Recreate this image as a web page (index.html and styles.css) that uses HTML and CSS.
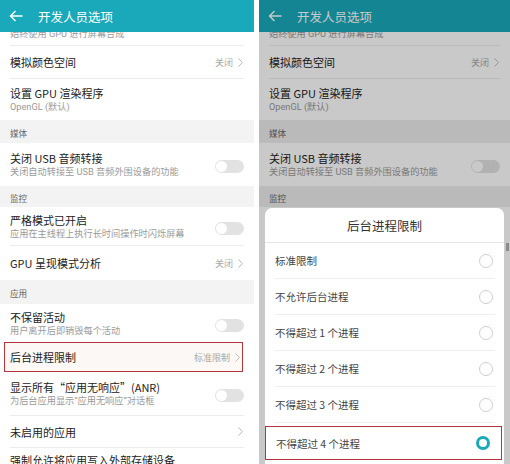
FILE: index.html
```html
<!DOCTYPE html>
<html lang="zh-CN">
<head>
<meta charset="utf-8">
<title>开发人员选项</title>
<link rel="stylesheet" href="styles.css">
</head>
<body>
<div class="panel">
  <div class="header">
    <svg class="back" width="14" height="12" viewBox="0 0 14 12"><path d="M13.5 6H1.5M6.5 1L1.5 6L6.5 11" fill="none" stroke="#fff" stroke-width="1.4"/></svg>
    <span>开发人员选项</span>
  </div>
  <div class="list">
    <div class="row partial"><div class="sub cut">始终使用 GPU 进行屏幕合成</div></div>
    <div class="row h33"><div class="title">模拟颜色空间</div><div class="val">关闭<svg class="chev" width="5" height="9" viewBox="0 0 5 9"><path d="M0.5 0.5L4.5 4.5L0.5 8.5" fill="none" stroke="#bbb" stroke-width="1"/></svg></div></div>
    <div class="row h41 nb"><div class="txt"><div class="title">设置 GPU 渲染程序</div><div class="sub">OpenGL (默认)</div></div></div>
    <div class="band h23">媒体</div>
    <div class="row h43 nb"><div class="txt"><div class="title">关闭 USB 音频转接</div><div class="sub">关闭自动转接至 USB 音频外围设备的功能</div></div><div class="toggle"></div></div>
    <div class="band h21">监控</div>
    <div class="row h39"><div class="txt"><div class="title">严格模式已开启</div><div class="sub">应用在主线程上执行长时间操作时闪烁屏幕</div></div><div class="toggle"></div></div>
    <div class="row h34 nb"><div class="title">GPU 呈现模式分析</div><div class="val">关闭<svg class="chev" width="5" height="9" viewBox="0 0 5 9"><path d="M0.5 0.5L4.5 4.5L0.5 8.5" fill="none" stroke="#bbb" stroke-width="1"/></svg></div></div>
    <div class="band h24">应用</div>
    <div class="row h38 nb"><div class="txt"><div class="title">不保留活动</div><div class="sub">用户离开后即销毁每个活动</div></div><div class="toggle"></div></div>
    <div class="row hl"><div class="title">后台进程限制</div><div class="val">标准限制<svg class="chev" width="5" height="9" viewBox="0 0 5 9"><path d="M0.5 0.5L4.5 4.5L0.5 8.5" fill="none" stroke="#bbb" stroke-width="1"/></svg></div></div>
    <div class="row h44"><div class="txt"><div class="title">显示所有“应用无响应”(ANR)</div><div class="sub">为后台应用显示“应用无响应”对话框</div></div><div class="toggle"></div></div>
    <div class="row h32"><div class="title">未启用的应用</div><div class="val"><svg class="chev" width="5" height="9" viewBox="0 0 5 9"><path d="M0.5 0.5L4.5 4.5L0.5 8.5" fill="none" stroke="#bbb" stroke-width="1"/></svg></div></div>
    <div class="row tail nb"><div class="title">强制允许将应用写入外部存储设备</div></div>
  </div>
</div>

<div class="panel right">
  <div class="header">
    <svg class="back" width="14" height="12" viewBox="0 0 14 12"><path d="M13.5 6H1.5M6.5 1L1.5 6L6.5 11" fill="none" stroke="#fff" stroke-width="1.4"/></svg>
    <span>开发人员选项</span>
  </div>
  <div class="list">
    <div class="row partial"><div class="sub cut">始终使用 GPU 进行屏幕合成</div></div>
    <div class="row h33"><div class="title">模拟颜色空间</div><div class="val">关闭<svg class="chev" width="5" height="9" viewBox="0 0 5 9"><path d="M0.5 0.5L4.5 4.5L0.5 8.5" fill="none" stroke="#bbb" stroke-width="1"/></svg></div></div>
    <div class="row h41 nb"><div class="txt"><div class="title">设置 GPU 渲染程序</div><div class="sub">OpenGL (默认)</div></div></div>
    <div class="band h23">媒体</div>
    <div class="row h43 nb"><div class="txt"><div class="title">关闭 USB 音频转接</div><div class="sub">关闭自动转接至 USB 音频外围设备的功能</div></div><div class="toggle"></div></div>
    <div class="band h21">监控</div>
  </div>
  <div class="dim"></div>
  <div class="dialog">
    <div class="dtitle">后台进程限制</div>
    <div class="opt"><span>标准限制</span><i class="radio"></i></div>
    <div class="opt"><span>不允许后台进程</span><i class="radio"></i></div>
    <div class="opt"><span>不得超过 1 个进程</span><i class="radio"></i></div>
    <div class="opt"><span>不得超过 2 个进程</span><i class="radio"></i></div>
    <div class="opt"><span>不得超过 3 个进程</span><i class="radio"></i></div>
    <div class="opt sel"><span>不得超过 4 个进程</span><i class="radio on"></i></div>
  </div>
  <div class="scroll"></div>
</div>
</body>
</html>
```
FILE: styles.css
```css
* { box-sizing: border-box; }
body {
  margin: 0;
  width: 510px;
  height: 464px;
  overflow: hidden;
  display: flex;
  gap: 5px;
  background: #fff;
  font-family: "Noto Sans CJK SC", "Noto Sans", sans-serif;
}
.panel {
  position: relative;
  width: 254px;
  height: 464px;
  overflow: hidden;
  background: #fff;
  flex: none;
}
.panel.right { width: 251px; }
.header {
  position: relative;
  z-index: 2;
  height: 32px;
  background: #1aa9ba;
  display: flex;
  align-items: center;
  padding-left: 9px;
  color: #fff;
  font-size: 12.5px;
}
.header .back { margin-right: 15px; flex: none; }
.list { display: flex; flex-direction: column; }
.row {
  margin: 0 10px;
  border-bottom: 1px solid #ececec;
  display: flex;
  align-items: center;
  justify-content: space-between;
  flex: none;
}
.row.nb { border-bottom: none; }
.partial { height: 14px; overflow: hidden; align-items: flex-start; }
.sub.cut { margin-top: -5px; }
.h21 { height: 21px; } .h23 { height: 23px; } .h24 { height: 24px; }
.h32 { height: 32px; } .h33 { height: 33px; } .h34 { height: 34px; }
.h38 { height: 38px; } .h39 { height: 39px; } .h41 { height: 41px; }
.h43 { height: 43px; } .h44 { height: 44px; }
.title { font-size: 11px; line-height: 14px; color: #222; white-space: nowrap; }
.sub {
  font-family: Roboto, "Noto Sans CJK SC", sans-serif;
  font-size: 9.2px;
  line-height: 13px;
  color: #9a9a9a;
  white-space: nowrap;
}
.txt { display: flex; flex-direction: column; }
.val {
  display: flex;
  align-items: center;
  gap: 5px;
  font-size: 9px;
  color: #a8a8a8;
  margin-right: 1px;
}
.toggle {
  width: 29px;
  height: 13px;
  border-radius: 7px;
  background: #e2e2e2;
  position: relative;
  flex: none;
  margin-top: 4px;
}
.toggle::before {
  content: "";
  position: absolute;
  left: 1px;
  top: 1px;
  width: 11px;
  height: 11px;
  border-radius: 50%;
  background: #fff;
}
.band {
  background: #f3f3f3;
  font-size: 8.6px;
  color: #666;
  padding-left: 10px;
  display: flex;
  align-items: center;
  padding-top: 2px;
  flex: none;
}
.row.hl {
  height: 30px;
  margin: 0 11px 0 4px;
  padding: 0 1px 0 5px;
  border: 1.5px solid #b8343c;
  background: #fcf8f5;
}
.tail { height: 30px; align-items: flex-start; padding-top: 5px; }

.dim {
  position: absolute;
  inset: 0;
  background: rgba(0, 0, 0, 0.21);
  z-index: 3;
}
.right .band { background: #ececec; }
.dialog {
  position: absolute;
  z-index: 4;
  left: 6px;
  width: 239px;
  top: 208px;
  bottom: -10px;
  background: #fff;
  border-radius: 7px 7px 0 0;
}
.dtitle {
  height: 35px;
  border-bottom: 1px solid #e6e6e6;
  text-align: center;
  font-size: 12.5px;
  line-height: 36px;
  color: #333;
}
.opt {
  height: 36px;
  margin: 0 9px 0 10px;
  border-bottom: 1px solid #eeeeee;
  display: flex;
  align-items: center;
  justify-content: space-between;
  font-size: 10.5px;
  color: #444;
}
.radio {
  width: 14px;
  height: 14px;
  border-radius: 50%;
  border: 1px solid #cfcfcf;
  flex: none;
  margin-right: 2px;
}
.radio.on {
  border: 3.5px solid #1aa9ba;
  background: #fff;
}
.opt.sel {
  margin: 3px 2px 0 0;
  padding: 0 9px 0 10px;
  height: 34px;
  border: 1.5px solid #b8343c;
}
.scroll {
  position: absolute;
  z-index: 5;
  right: 1px;
  top: 243px;
  width: 3px;
  height: 8px;
  background: #8a8a8a;
}
```
